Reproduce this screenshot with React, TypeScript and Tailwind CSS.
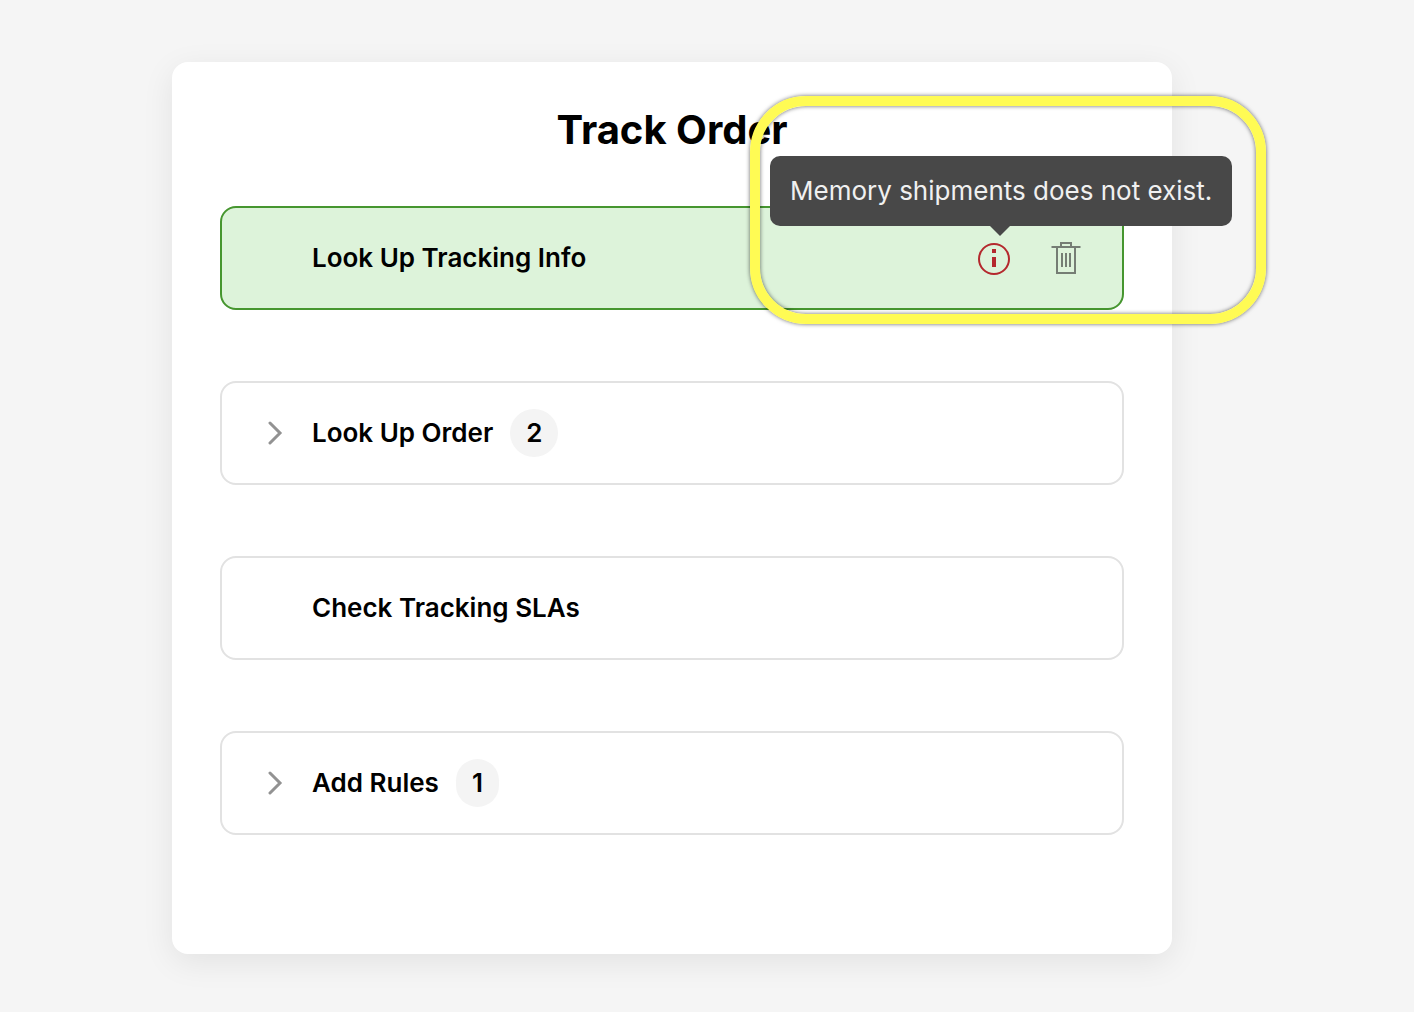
import React from "react";

type Step = { name: string; count?: number; error?: string };

const steps: Step[] = [
  { name: "Look Up Tracking Info", error: "Memory shipments does not exist." },
  { name: "Look Up Order", count: 2 },
  { name: "Check Tracking SLAs" },
  { name: "Add Rules", count: 1 },
];

function Chevron() {
  return (
    <svg viewBox="0 0 16 24" className="h-6 w-4" fill="none" stroke="#929292" strokeWidth="3" aria-hidden="true">
      <path d="M3 2 13 12 3 22" strokeLinecap="round" />
    </svg>
  );
}

function InfoIcon() {
  return (
    <svg viewBox="0 0 32 32" className="size-8" fill="none" aria-hidden="true">
      <circle cx="16" cy="16" r="15" stroke="#b4282d" strokeWidth="2" />
      <path d="M14 6h4v4h-4zM14 14h4v10h-4z" fill="#b4282d" />
    </svg>
  );
}

function TrashIcon() {
  return (
    <svg viewBox="0 0 30 32" className="h-8 w-[30px]" fill="none" stroke="#757d74" strokeWidth="2" aria-hidden="true">
      <path d="M0.5 5H29.5M10 5V1H20V5M6 5V31H24V5M11 11V25M15 11V25M19 11V25" />
    </svg>
  );
}

function ErrorTip({ text }: { text: string }) {
  return (
    <>
      <div
        role="tooltip"
        id="step-error"
        className="absolute -top-[87px] -left-[208px] rounded-[10px] bg-[#484848] px-5 py-4 text-[26px] leading-[38px] font-normal whitespace-nowrap text-[#f0f0f0]"
      >
        {text}
        <span className="absolute top-full left-[220px] border-x-10 border-t-10 border-x-transparent border-t-[#484848]" />
      </div>
      <div className="pointer-events-none absolute -top-[147px] -left-[228px] h-[228px] w-[516px] rounded-[56px] border-10 border-[#fffb54] shadow-[0_0_4px_rgba(0,0,0,0.6),inset_0_0_4px_rgba(0,0,0,0.6)]" />
    </>
  );
}

function StepRow({ step }: { step: Step }) {
  const tone = step.error ? "border-[#46962f] bg-[#ddf3da]" : "border-[#e2e2e2] bg-white";
  return (
    <li className={`flex h-[104px] items-center rounded-2xl border-2 pr-[41px] pl-[45px] ${tone}`}>
      <div className="flex w-[45px] shrink-0 items-center">
        {step.count !== undefined && (
          <button type="button" aria-label={`Expand ${step.name}`}>
            <Chevron />
          </button>
        )}
      </div>
      <span className="text-[26px] leading-8 font-semibold">{step.name}</span>
      {step.count !== undefined && (
        <span className="ml-[17px] rounded-full bg-[#f4f4f4] px-4 text-[26px] leading-[48px] font-semibold">{step.count}</span>
      )}
      {step.error && (
        <div className="ml-auto flex items-center gap-[41px]">
          <div className="relative mt-0.5 size-8">
            <button type="button" aria-label="Show error" aria-describedby="step-error" className="block">
              <InfoIcon />
            </button>
            <ErrorTip text={step.error} />
          </div>
          <button type="button" aria-label="Delete step">
            <TrashIcon />
          </button>
        </div>
      )}
    </li>
  );
}

export default function App() {
  return (
    <div className="min-h-screen bg-[#f5f5f5] pt-[62px] pr-[242px] pb-[58px] pl-[172px] font-['Inter',sans-serif] text-black">
      <main className="rounded-2xl bg-white px-12 pt-11 pb-[119px] shadow-[0_8px_32px_rgba(0,0,0,0.08)]">
        <h1 className="text-center text-[40px] leading-[48px] font-bold">Track Order</h1>
        <ul className="mt-[52px] flex flex-col gap-[71px]">
          {steps.map((step) => (
            <StepRow key={step.name} step={step} />
          ))}
        </ul>
      </main>
    </div>
  );
}
